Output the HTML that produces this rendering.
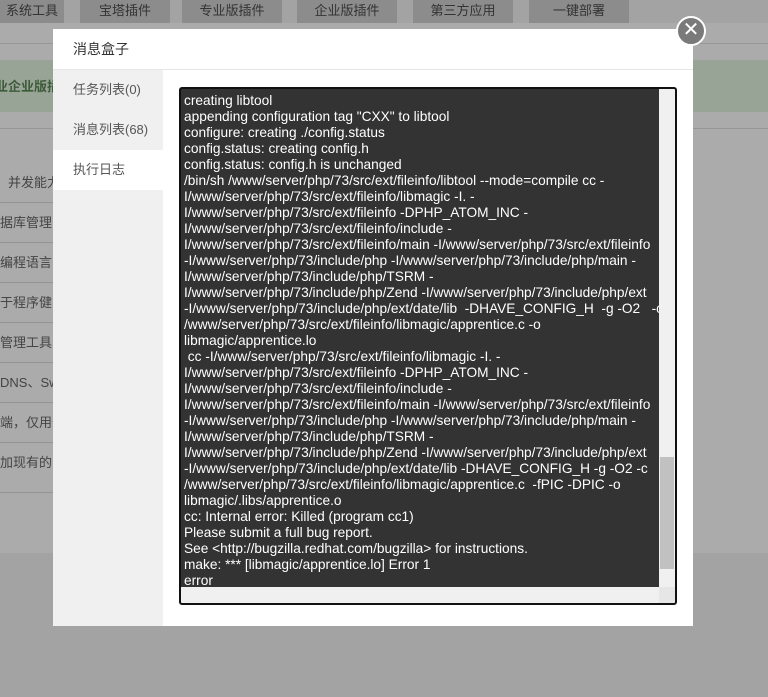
<!DOCTYPE html>
<html><head><meta charset="utf-8"><style>
*{margin:0;padding:0;box-sizing:border-box}
body{width:768px;height:697px;overflow:hidden;background:#a3a3a3;font-family:"Liberation Sans","Noto Sans CJK SC",sans-serif;position:relative}
.tab{position:absolute;top:0;height:23px;background:#8c8c8c;color:#333;font-size:13px;text-align:center;line-height:22px}
.under{position:absolute;left:0;top:23px;width:768px;height:530px;background:#ababab}
.line{position:absolute;left:0;width:768px;height:1px;background:#969696}
.green{position:absolute;left:0;top:60px;width:768px;height:52px;background:#98a596}
.row{position:absolute;left:0;width:160px;height:40px;border-bottom:1px solid #949494;color:#444;font-size:13px;line-height:40px}
.modal{position:absolute;left:53px;top:29px;width:640px;height:597px;background:#fff}
.title{height:41px;border-bottom:1px solid #e6e6e6;font-size:14px;color:#333;line-height:40px;padding-left:20px}
.side{position:absolute;left:0;top:41px;width:110px;height:556px;background:#f0f0f0}
.side div{height:40px;line-height:40px;padding-left:20px;font-size:13px;color:#555}
.side .act{background:#fff}
.box{position:absolute;left:126px;top:58px;width:498px;height:518px;background:#333;border:2px solid #111;border-radius:3px;overflow:hidden}
pre{position:absolute;left:3px;top:4px;color:#fff;font-family:"Liberation Sans","Noto Sans CJK SC",sans-serif;font-size:13.7px;line-height:16px;white-space:pre}
.vs{position:absolute;right:0;top:0;width:16px;height:500px;background:#f0f0f0}
.thumb{position:absolute;right:1px;top:368px;width:14px;height:112px;background:#c1c1c1}
.hs{position:absolute;left:0;bottom:0;width:480px;height:16px;background:#f0f0f0}
.corner{position:absolute;right:0;bottom:0;width:16px;height:16px;background:#e6e6e6}
.close{position:absolute;left:676px;top:16px;width:30px;height:30px;border-radius:50%;background:#7a7a7a;border:2px solid #fff;color:#fff;font-size:20px;text-align:center;line-height:25px}
</style></head><body>
<div class="under"></div>
<div class="line" style="top:43px"></div>
<div class="tab" style="left:0;width:64px">系统工具</div>
<div class="tab" style="left:80px;width:90px">宝塔插件</div>
<div class="tab" style="left:182px;width:100px">专业版插件</div>
<div class="tab" style="left:297px;width:100px">企业版插件</div>
<div class="tab" style="left:413px;width:100px">第三方应用</div>
<div class="tab" style="left:529px;width:100px">一键部署</div>
<div class="green"><span style="position:absolute;left:-5px;top:16px;font-size:13px;color:#3d5a3a;font-weight:bold">业企业版插</span></div>
<div class="line" style="top:128px"></div>
<div class="row" style="top:163px;padding-left:8px">并发能力</div>
<div class="row" style="top:203px">据库管理</div>
<div class="row" style="top:243px">编程语言</div>
<div class="row" style="top:283px">于程序健</div>
<div class="row" style="top:323px">管理工具</div>
<div class="row" style="top:363px">DNS、Sw</div>
<div class="row" style="top:403px">端，仅用于</div>
<div class="row" style="top:443px;height:50px">加现有的N</div>
<div class="modal">
<div class="title">消息盒子</div>
<div class="side"><div>任务列表(0)</div><div>消息列表(68)</div><div class="act">执行日志</div></div>
<div class="box">
<pre>creating libtool
appending configuration tag "CXX" to libtool
configure: creating ./config.status
config.status: creating config.h
config.status: config.h is unchanged
/bin/sh /www/server/php/73/src/ext/fileinfo/libtool --mode=compile cc -
I/www/server/php/73/src/ext/fileinfo/libmagic -I. -
I/www/server/php/73/src/ext/fileinfo -DPHP_ATOM_INC -
I/www/server/php/73/src/ext/fileinfo/include -
I/www/server/php/73/src/ext/fileinfo/main -I/www/server/php/73/src/ext/fileinfo
-I/www/server/php/73/include/php -I/www/server/php/73/include/php/main -
I/www/server/php/73/include/php/TSRM -
I/www/server/php/73/include/php/Zend -I/www/server/php/73/include/php/ext
-I/www/server/php/73/include/php/ext/date/lib  -DHAVE_CONFIG_H  -g -O2   -c
/www/server/php/73/src/ext/fileinfo/libmagic/apprentice.c -o
libmagic/apprentice.lo
 cc -I/www/server/php/73/src/ext/fileinfo/libmagic -I. -
I/www/server/php/73/src/ext/fileinfo -DPHP_ATOM_INC -
I/www/server/php/73/src/ext/fileinfo/include -
I/www/server/php/73/src/ext/fileinfo/main -I/www/server/php/73/src/ext/fileinfo
-I/www/server/php/73/include/php -I/www/server/php/73/include/php/main -
I/www/server/php/73/include/php/TSRM -
I/www/server/php/73/include/php/Zend -I/www/server/php/73/include/php/ext
-I/www/server/php/73/include/php/ext/date/lib -DHAVE_CONFIG_H -g -O2 -c
/www/server/php/73/src/ext/fileinfo/libmagic/apprentice.c  -fPIC -DPIC -o
libmagic/.libs/apprentice.o
cc: Internal error: Killed (program cc1)
Please submit a full bug report.
See &lt;http://bugzilla.redhat.com/bugzilla&gt; for instructions.
make: *** [libmagic/apprentice.lo] Error 1
error</pre>
<div class="vs"><div class="thumb"></div></div>
<div class="hs"></div><div class="corner"></div>
</div>
</div>
<div class="close">✕</div>
</body></html>
